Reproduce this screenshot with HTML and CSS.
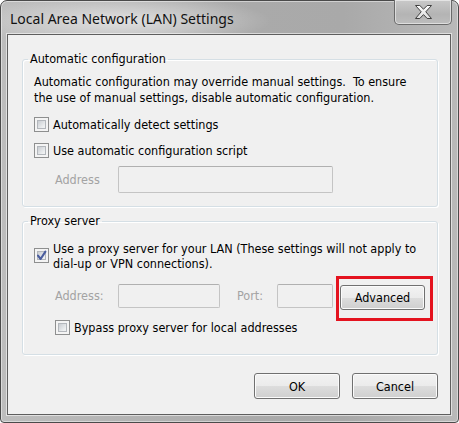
FILE: index.html
```html
<!DOCTYPE html>
<html lang="en">
  <head>
    <meta charset="UTF-8" />
    <title>Local Area Network (LAN) Settings</title>
    <link rel="stylesheet" href="styles.css">
  </head>
  <body>
    <!-- Dialog window -->
    <div class="window">
      <!-- Title bar -->
      <div class="titlebar">
        <span class="title">Local Area Network (LAN) Settings</span>
        <button class="close" aria-label="Close">
          <svg width="17" height="14" viewBox="0 0 17 14">
            <defs>
              <linearGradient id="xfill" x1="0" y1="0" x2="0" y2="1">
                <stop offset="0" stop-color="#ffffff" />
                <stop offset="1" stop-color="#dcdcdc" />
              </linearGradient>
            </defs>
            <polygon points="0.5,0.5 4.8,0.5 8.5,4.2 12.2,0.5 16.5,0.5 10.8,6.8 16.5,13.5 12.2,13.5 8.5,9.6 4.8,13.5 0.5,13.5 6.2,6.8" fill="url(#xfill)" stroke="#3f3f3f" stroke-width="1" stroke-linejoin="round" />
          </svg>
        </button>
      </div>

      <!-- Client area -->
      <div class="client">
        <!-- Automatic configuration group -->
        <fieldset class="group auto-group">
          <legend>Automatic configuration</legend>
          <p class="note">Automatic configuration may override manual settings.&nbsp; To ensure<br>the use of manual settings, disable automatic configuration.</p>
          <label class="option first"><span class="check"></span>Automatically detect settings</label>
          <label class="option second"><span class="check"></span>Use automatic configuration script</label>
          <div class="field-row script-row">
            <span class="field-label script-label">Address</span>
            <span class="textbox script-box"></span>
          </div>
        </fieldset>

        <!-- Proxy server group -->
        <fieldset class="group proxy-group">
          <legend>Proxy server</legend>
          <label class="option proxy-option">
            <span class="check checked">
              <svg width="15" height="15" viewBox="0 0 15 15">
                <path d="M4 7.6 L6.6 11 L11.4 3.6" fill="none" stroke="#4a5d9e" stroke-width="2.1" stroke-linecap="round" stroke-linejoin="round" />
              </svg>
            </span>
            <span>Use a proxy server for your LAN (These settings will not apply to<br>dial-up or VPN connections).</span>
          </label>
          <div class="field-row proxy-row">
            <span class="field-label addr-label">Address:</span>
            <span class="textbox addr-box"></span>
            <span class="field-label port-label">Port:</span>
            <span class="textbox port-box"></span>
            <span class="highlight"><button class="btn advanced">Advanced</button></span>
          </div>
          <label class="option bypass"><span class="check"></span>Bypass proxy server for local addresses</label>
        </fieldset>

        <!-- Dialog buttons -->
        <div class="actions">
          <button class="btn">OK</button>
          <button class="btn">Cancel</button>
        </div>
      </div>
    </div>
  </body>
</html>
```

FILE: styles.css
```css
/* Page */
body {
  margin: 0;
  padding: 0;
  background-color: #ffffff;
  font-family: "DejaVu Sans Condensed", "DejaVu Sans", sans-serif;
  font-size: 12.5px;
  color: #000;
}

/* Window frame */
.window {
  box-sizing: border-box;
  width: 459px;
  height: 423px;
  display: flex;
  flex-direction: column;
  padding: 0 7px 7px 6px;
  border: 1px solid #4a4a4a;
  border-radius: 7px 7px 4px 4px;
  background:
    radial-gradient(ellipse 150px 26px at 120px 20px, rgba(255, 255, 255, 0.6), rgba(255, 255, 255, 0)),
    linear-gradient(to right, #bdbdbd, #aaaaaa 55%, #a9a9a9 75%, #b9b9b9);
  box-shadow: inset 0 0 0 1px rgba(255, 255, 255, 0.45);
}

/* Title bar */
.titlebar {
  height: 33px;
  display: flex;
  justify-content: space-between;
  align-items: flex-start;
}
.title {
  font-family: "Noto Sans", "Open Sans", sans-serif;
  font-size: 14px;
  line-height: 20px;
  padding: 8px 0 0 3px;
  color: #111;
}
/* Close button */
.close {
  width: 58px;
  height: 25px;
  margin: -1px -1px 0 0;
  padding: 0;
  display: flex;
  align-items: center;
  justify-content: center;
  border: 1px solid #6a6a6a;
  border-top: none;
  border-radius: 0 0 5px 5px;
  background: linear-gradient(#c9c9c9, #b4b4b4 60%, #bdbdbd);
  box-shadow: inset 0 0 0 1px rgba(255, 255, 255, 0.5);
}

/* Client area */
.client {
  flex: 1;
  display: flex;
  flex-direction: column;
  background-color: #f0f0f0;
  border: 1px solid #5e5e5e;
  box-shadow: 0 0 0 1px rgba(255, 255, 255, 0.55);
}

/* Group boxes */
.group {
  margin: 0 12px 0 14px;
  padding: 0 11px;
  border: 1px solid #d5dfe5;
  border-radius: 3px;
  box-shadow: inset 1px 1px 0 #ffffff, 1px 1px 0 #ffffff;
  min-width: 0;
}
.group legend {
  margin-left: -6px;
  padding: 0 2px;
  line-height: 16px;
}
.auto-group {
  margin-top: 16px;
  padding-top: 7px;
  padding-bottom: 13px;
}
.proxy-group {
  margin-top: 6px;
  padding-top: 12px;
  padding-bottom: 19px;
}

/* Description text */
.note {
  margin: 0;
  line-height: 15.5px;
}

/* Checkbox rows */
.option {
  display: flex;
  align-items: center;
  gap: 4px;
  line-height: 15px;
}
.option.first {
  margin-top: 12px;
}
.option.second {
  margin-top: 11px;
}
.proxy-option {
  align-items: flex-start;
}
.proxy-option .check {
  margin-top: 7px;
}
.bypass {
  margin-top: 10px;
  margin-left: 21px;
}

/* Checkbox */
.check {
  position: relative;
  flex: none;
  box-sizing: border-box;
  width: 15px;
  height: 15px;
  padding: 2px;
  border: 1px solid #8e8f8f;
  background-color: #f4f4f4;
}
.check::before {
  content: "";
  display: block;
  box-sizing: border-box;
  width: 100%;
  height: 100%;
  border: 1px solid #b3b7bc;
  background: linear-gradient(135deg, #c9cdd2, #eef0f1 80%);
}
.check svg {
  position: absolute;
  left: -1px;
  top: -1px;
}

/* Field rows */
.field-row {
  display: flex;
  align-items: center;
}
.script-row {
  margin-top: 8px;
}
.proxy-row {
  margin-top: 13px;
  align-items: flex-start;
}
.field-label {
  color: #a3a3a3;
  flex: none;
}
.script-label,
.addr-label {
  width: 63px;
  margin-left: 21px;
}
.proxy-row .field-label {
  line-height: 24px;
}
.port-label {
  width: 40px;
  margin-left: 17px;
}

/* Disabled text boxes */
.textbox {
  box-sizing: border-box;
  flex: none;
  height: 24px;
  border: 1px solid #c4c4c4;
  border-top-color: #b0b0b0;
  border-radius: 2px;
  background-color: #f0f0f0;
}
.script-box {
  width: 215px;
  height: 27px;
}
.addr-box {
  width: 102px;
}
.port-box {
  width: 56px;
}

/* Push buttons */
.btn {
  box-sizing: border-box;
  width: 86px;
  height: 26px;
  padding: 0;
  border: 1px solid #707070;
  border-radius: 3px;
  font-family: inherit;
  font-size: 12.5px;
  color: #000;
  background: linear-gradient(#f2f2f2 0%, #ebebeb 50%, #dddddd 50%, #cfcfcf 100%);
  box-shadow: inset 0 0 0 1px #fbfbfb;
}

/* Advanced button with red marker */
.highlight {
  position: relative;
  margin-left: 7px;
  margin-top: 1px;
}
.highlight::after {
  content: "";
  position: absolute;
  left: -4px;
  top: -9px;
  right: -8px;
  bottom: -11px;
  border: 3px solid #e4131f;
}
.advanced {
  display: block;
  width: 85px;
  height: 25px;
}

/* OK / Cancel */
.actions {
  display: flex;
  justify-content: flex-end;
  gap: 12px;
  margin: 18px 12px 0 0;
}
```
